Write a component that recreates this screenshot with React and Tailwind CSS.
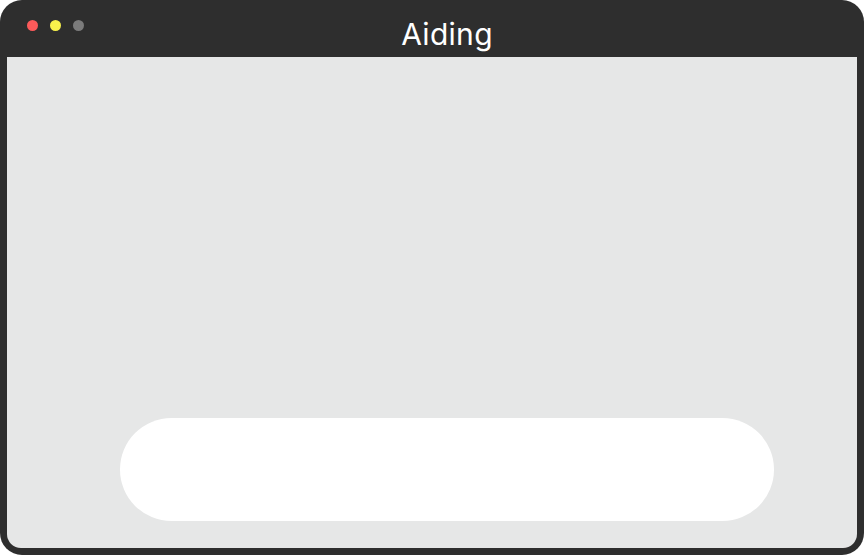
import React from "react";

export default function App() {
  return (
    <div className="w-[864px] h-[557px] bg-white" style={{ fontFamily: "Inter, 'Noto Sans', sans-serif" }}>
      <div className="h-[555px] rounded-[22px] bg-[#2e2e2e] px-[7px] pb-[7px] flex flex-col">
        {/* Title bar */}
        <div className="h-[57px] flex items-start">
          <div className="flex gap-[12px] pl-[20px] pt-[20px]">
            <span className="w-[11px] h-[11px] rounded-full bg-[#fb5a5a]" />
            <span className="w-[11px] h-[11px] rounded-full bg-[#f8f14c]" />
            <span className="w-[11px] h-[11px] rounded-full bg-[#7b7b7b]" />
          </div>
          <h1 className="flex-1 mr-[47px] pt-[16px] text-center text-[30px] leading-[36px] text-white font-normal tracking-[0.3px]">
            Aiding
          </h1>
        </div>

        {/* Content */}
        <div className="flex-1 bg-[#e6e7e7] rounded-b-[14px] flex items-end pb-[27px]">
          <div className="ml-[113px] w-[654px] h-[103px] rounded-full bg-white" />
        </div>
      </div>
    </div>
  );
}
